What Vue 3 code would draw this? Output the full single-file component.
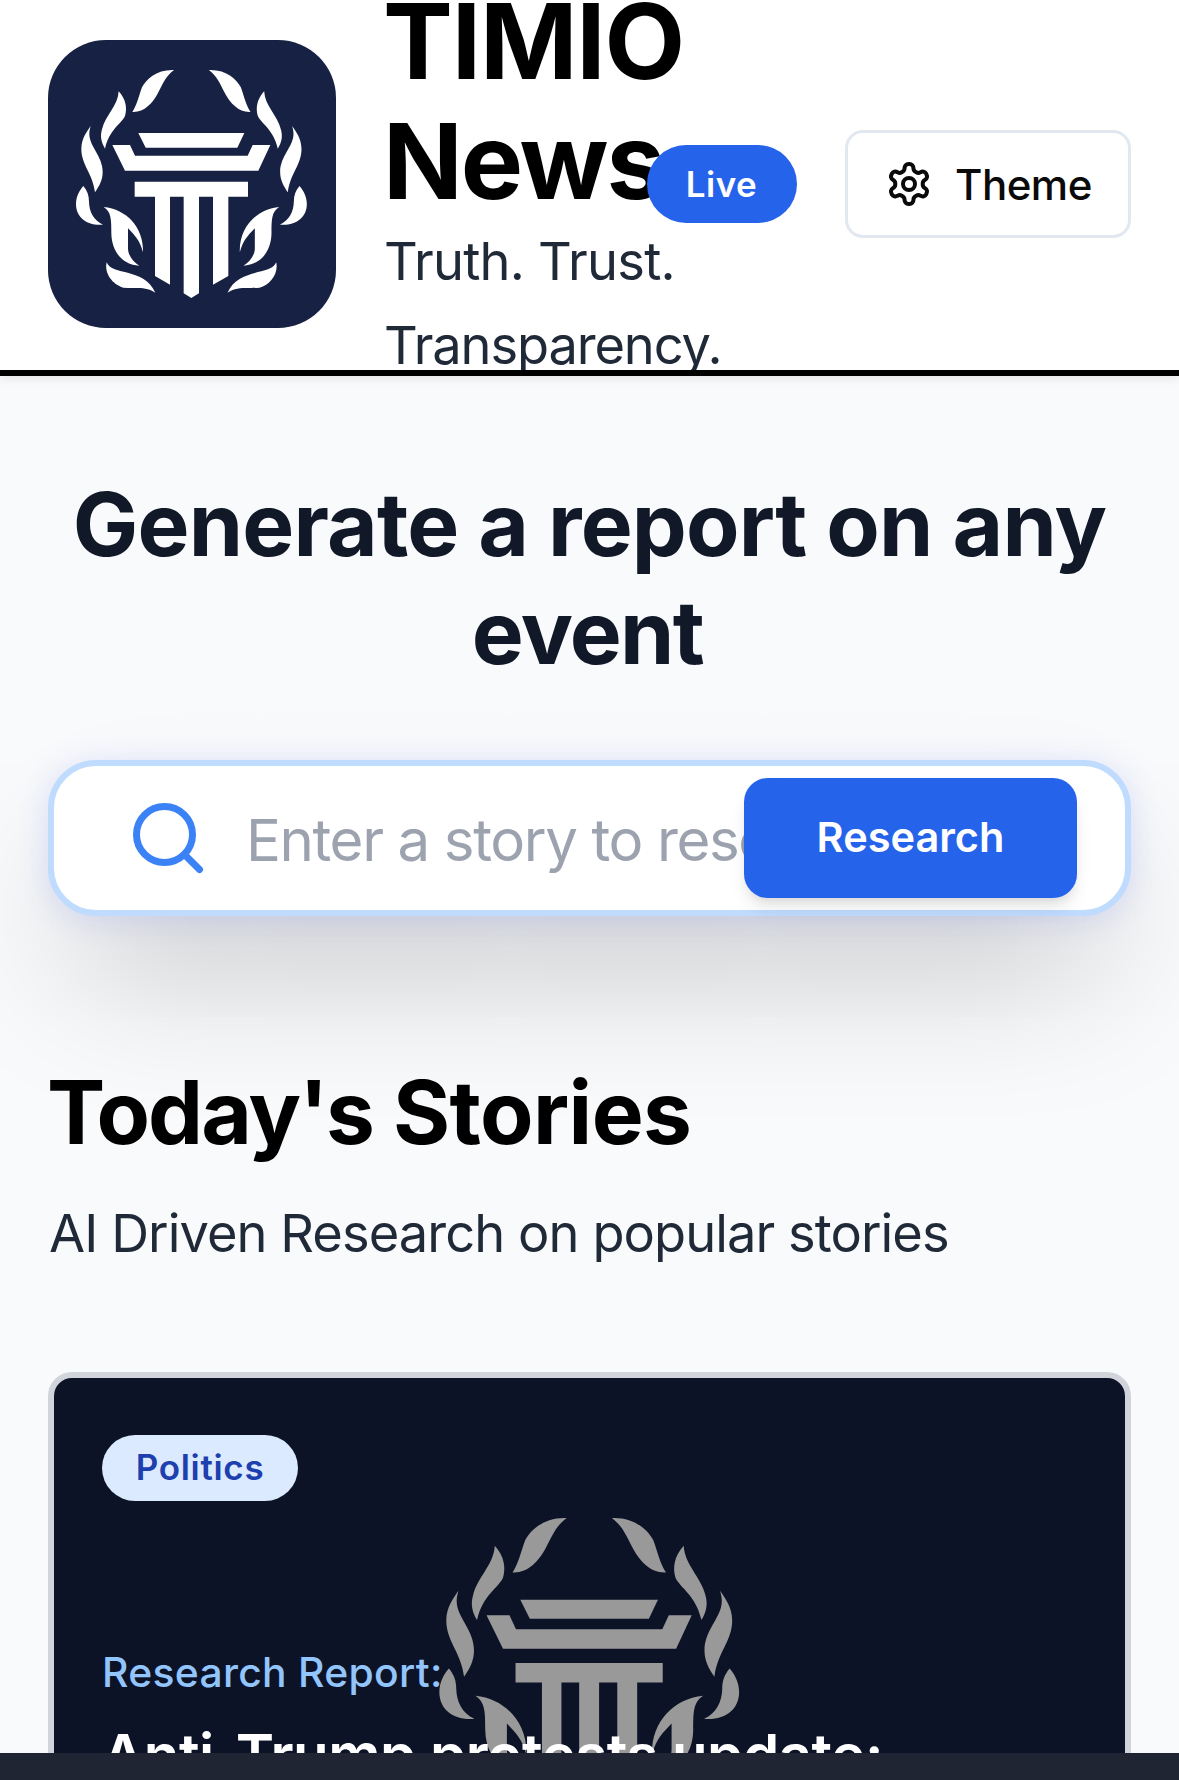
<script setup>
import { ref } from 'vue'

const query = ref('')
const leaves = [
  'M402 120C350 118 318 148 306 172C296 199 292 222 277 246C312 248 337 220 352 193C370 158 378 138 402 120Z',
  'M236 184C258 208 262 235 255 258C244 282 208 298 195 356C183 336 180 318 186 298C196 256 234 228 236 184Z',
  'M152 288C142 303 124 325 124 357C124 405 158 430 165 487C178 468 188 450 188 426C188 378 148 350 148 312C148 303 150 296 152 288Z',
  'M130 468C118 482 108 500 108 522C108 562 140 588 189 584C160 570 148 545 147 515C147 497 142 482 130 468Z',
  'M191 531C262 538 312 595 309 667C300 632 286 618 264 595V655C264 675 278 695 298 707C250 705 215 668 214 610C214 570 214 545 191 531Z',
  'M200 697C215 738 312 712 346 788C315 768 290 776 250 773C218 764 192 730 200 697Z'
]
const pillar = [
  'M295 309H613L592 353H317Z',
  'M217 345H270L285 377H623L638 345H691L655 422H255Z',
  'M284 455H624V500H565V738L519 764V500H477V790L454 804L431 790V500H390V764L345 738V500H284Z'
]
</script>

<template>
  <div class="page">
    <header class="header">
      <div class="brand">
        <svg class="logo" viewBox="24 30 864 864" aria-hidden="true">
          <rect x="24" y="30" width="864" height="864" rx="174" fill="#172143" />
          <g fill="#fff">
            <path v-for="d in pillar" :key="d" :d="d" />
            <path v-for="d in leaves" :key="d" :d="d" />
            <g transform="translate(908.5 0) scale(-1 1)">
              <path v-for="d in leaves" :key="d" :d="d" />
            </g>
          </g>
        </svg>
        <div class="brand-text">
          <div class="brand-name"><span class="timio">TIMIO</span> <span class="news">News</span></div>
          <p class="tagline">Truth. Trust. <span class="transparency">Transparency.</span></p>
        </div>
      </div>
      <div class="actions">
        <span class="live">Live</span>
        <button class="theme" type="button">
          <svg width="48" height="48" viewBox="0 0 24 24" fill="none" stroke="currentColor" stroke-width="2" stroke-linecap="round" stroke-linejoin="round">
            <path d="M12.22 2h-.44a2 2 0 0 0-2 2v.18a2 2 0 0 1-1 1.73l-.43.25a2 2 0 0 1-2 0l-.15-.08a2 2 0 0 0-2.73.73l-.22.38a2 2 0 0 0 .73 2.73l.15.1a2 2 0 0 1 1 1.72v.51a2 2 0 0 1-1 1.74l-.15.09a2 2 0 0 0-.73 2.73l.22.38a2 2 0 0 0 2.73.73l.15-.08a2 2 0 0 1 2 0l.43.25a2 2 0 0 1 1 1.73V20a2 2 0 0 0 2 2h.44a2 2 0 0 0 2-2v-.18a2 2 0 0 1 1-1.73l.43-.25a2 2 0 0 1 2 0l.15.08a2 2 0 0 0 2.73-.73l.22-.39a2 2 0 0 0-.73-2.73l-.15-.08a2 2 0 0 1-1-1.74v-.5a2 2 0 0 1 1-1.74l.15-.09a2 2 0 0 0 .73-2.73l-.22-.38a2 2 0 0 0-2.73-.73l-.15.08a2 2 0 0 1-2 0l-.43-.25a2 2 0 0 1-1-1.73V4a2 2 0 0 0-2-2z" />
            <circle cx="12" cy="12" r="3" />
          </svg>
          <span>Theme</span>
        </button>
      </div>
    </header>

    <main class="content">
      <h1 class="hero">Generate a report on any <span class="event">event</span></h1>

      <form class="search" @submit.prevent>
        <svg class="search-icon" width="84" height="84" viewBox="0 0 24 24" fill="none" stroke="#3b82f6" stroke-width="2" stroke-linecap="round" stroke-linejoin="round">
          <circle cx="11" cy="11" r="8" />
          <path d="m21 21-4.3-4.3" />
        </svg>
        <input v-model="query" class="search-input" type="text" placeholder="Enter a story to research">
        <button class="search-button" type="submit">Research</button>
      </form>

      <h2 class="stories-title"><span class="today">Today's</span> Stories</h2>
      <p class="stories-sub">AI Driven Research on popular stories</p>

      <article class="card">
        <svg class="card-mark" viewBox="24 30 864 864" fill="#999" aria-hidden="true">
          <path v-for="d in pillar" :key="d" :d="d" />
          <path v-for="d in leaves" :key="d" :d="d" />
          <g transform="translate(908.5 0) scale(-1 1)">
            <path v-for="d in leaves" :key="d" :d="d" />
          </g>
        </svg>
        <div class="card-body">
          <span class="tag">Politics</span>
          <p class="kicker">Research Report:</p>
          <h3 class="card-title">Anti-Trump protests update:</h3>
        </div>
      </article>
    </main>

    <div class="bottom-bar"></div>
  </div>
</template>

<style scoped>
.page {
  display: flex;
  flex-direction: column;
  height: 1780px;
  overflow: hidden;
  background: #f9fafc;
  font-family: Inter, "Liberation Sans", sans-serif;
}
h1, h2, h3, p { margin: 0; }
button { font-family: inherit; cursor: pointer; }

.header {
  position: relative;
  z-index: 1;
  flex: none;
  box-sizing: border-box;
  height: 376px;
  padding: 0 48px;
  display: flex;
  align-items: center;
  background: #fff;
  border-bottom: 6px solid #000;
  box-shadow: 0 3px 9px rgba(0, 0, 0, 0.08);
  overflow: hidden;
}
.brand {
  flex: 1;
  min-width: 0;
  display: flex;
  align-items: center;
  gap: 48px;
}
.logo { flex: none; width: 288px; height: 288px; margin-bottom: 2px; }
.brand-text { flex: none; width: 263px; height: 408px; margin-left: -1px; }
.brand-name {
  font-size: 104.7px;
  line-height: 120px;
  font-weight: 700;
  color: #000;
}
.timio { display: block; letter-spacing: -1.17px; }
.news { display: block; letter-spacing: -2.1px; }
.tagline {
  margin-top: -2px;
  padding-left: 1px;
  font-size: 52.4px;
  line-height: 84px;
  letter-spacing: -0.78px;
  white-space: nowrap;
  color: #1f2937;
}
.transparency { display: block; letter-spacing: -1.13px; }
.actions {
  position: relative;
  flex: none;
  display: flex;
  align-items: center;
  gap: 48px;
  margin-bottom: 2px;
}
.live {
  box-sizing: border-box;
  width: 150px;
  padding-right: 1px;
  line-height: 78px;
  border-radius: 39px;
  text-align: center;
  background: #2563eb;
  color: #fff;
  font-size: 35px;
  font-weight: 600;
  letter-spacing: 0.49px;
}
.theme {
  box-sizing: border-box;
  width: 286px;
  height: 108px;
  padding: 0 0 0 37px;
  display: flex;
  align-items: center;
  gap: 22px;
  background: #fff;
  border: 3px solid #e2e8f0;
  border-radius: 18px;
  color: #0a0a0a;
  font-size: 42px;
  font-weight: 500;
  letter-spacing: -0.5px;
}

.content {
  flex: 1;
  min-height: 0;
  overflow: hidden;
  padding: 94px 48px 0;
}
.hero {
  text-align: center;
  font-size: 87.3px;
  line-height: 108px;
  font-weight: 700;
  letter-spacing: -0.8px;
  color: #111827;
}
.event { display: block; padding-right: 4px; letter-spacing: -1.64px; }

.search {
  position: relative;
  box-sizing: border-box;
  height: 156px;
  margin-top: 74px;
  padding-left: 72px;
  display: flex;
  align-items: center;
  background: #fff;
  border: 6px solid #bfdbfe;
  border-radius: 48px;
  box-shadow: 0 3px 30px rgba(59, 90, 246, 0.15), 0 75px 150px -30px rgba(0, 0, 0, 0.25);
}
.search-icon { flex: none; }
.search-input {
  flex: 1;
  min-width: 0;
  height: 144px;
  margin: 0 0 0 36px;
  padding: 4px 0 0;
  border: 0;
  outline: 0;
  background: transparent;
  font-family: inherit;
  font-size: 58.2px;
  letter-spacing: -1.4px;
  color: #111827;
}
.search-input::placeholder { color: #9ca3af; opacity: 1; }
.search-button {
  position: absolute;
  right: 48px;
  top: 12px;
  width: 333px;
  height: 120px;
  padding: 0 0 2px;
  border: 0;
  border-radius: 24px;
  background: #2563eb;
  color: #fff;
  font-size: 41.5px;
  font-weight: 600;
  box-shadow: 0 12px 18px -3px rgba(0, 0, 0, 0.1), 0 6px 12px -6px rgba(0, 0, 0, 0.1);
}

.stories-title {
  position: relative;
  margin: 142px 0 0 -1px;
  font-size: 87.3px;
  line-height: 108px;
  font-weight: 700;
  letter-spacing: -0.6px;
  color: #000;
}
.today { letter-spacing: -1.95px; }
.stories-sub {
  position: relative;
  margin: 25px 0 0 1px;
  font-size: 52.4px;
  line-height: 84px;
  letter-spacing: -0.93px;
  color: #1f2937;
}

.card {
  position: relative;
  box-sizing: border-box;
  height: 588px;
  margin-top: 97px;
  border: 6px solid #d1d5db;
  border-radius: 24px;
  background: #0d1327;
  overflow: hidden;
}
.card-mark {
  position: absolute;
  left: 349px;
  top: 101px;
  width: 374px;
  height: 374px;
}
.card-body {
  position: relative;
  padding: 57px 48px 0;
  display: flex;
  flex-direction: column;
  align-items: flex-start;
}
.tag {
  box-sizing: border-box;
  width: 196px;
  height: 66px;
  line-height: 64px;
  border-radius: 33px;
  text-align: center;
  background: #dbeafe;
  color: #1e40af;
  font-size: 35px;
  font-weight: 600;
  letter-spacing: 0.7px;
}
.kicker {
  margin-top: 141px;
  font-size: 40.8px;
  line-height: 60px;
  font-weight: 500;
  letter-spacing: 0.31px;
  color: #93c5fd;
}
.card-title {
  margin-top: 16px;
  font-size: 58.2px;
  line-height: 75px;
  font-weight: 600;
  letter-spacing: -0.51px;
  white-space: nowrap;
  color: #fff;
}
.bottom-bar { flex: none; height: 27px; background: #1f2532; }
</style>
<style>
body { margin: 0; }
</style>
